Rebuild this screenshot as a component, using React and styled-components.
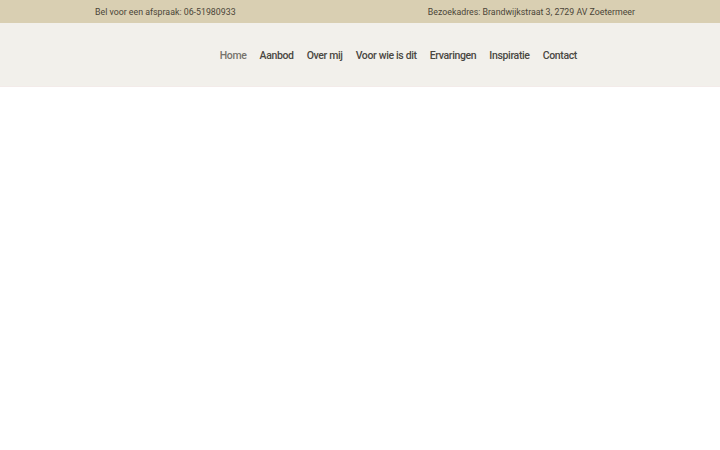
import styled, { createGlobalStyle } from "styled-components";

const GlobalStyle = createGlobalStyle`
    body {
        margin: 0;
        background: #ffffff;
        font-family: "Roboto", "Liberation Sans", sans-serif;
    }
`;

const TopBar = styled.div`
    height: 23px;
    background: #d9cfb2;
    padding: 0 85px 0 95px;
    display: flex;
    align-items: center;
    justify-content: space-between;
    font-size: 8.8px;
    color: #4b4538;
`;

const Header = styled.header`
    height: 63px;
    background: #f2f0eb;
    border-bottom: 1px solid #f3ebe9;
    display: flex;
    align-items: center;
    justify-content: flex-end;
    padding-right: 143px;
`;

const Nav = styled.nav`
    display: flex;
    gap: 13px;
    padding-top: 1px;
`;

const NavLink = styled.a`
    font-size: 10.5px;
    font-weight: 500;
    letter-spacing: -0.35px;
    color: ${(props) => (props.$active ? "#77736c" : "#4a4742")};
    text-decoration: none;
`;

const Main = styled.main`
    height: 364px;
`;

const links = ["Home", "Aanbod", "Over mij", "Voor wie is dit", "Ervaringen", "Inspiratie", "Contact"];

const App = () => {
    return (
        <>
            <GlobalStyle />
            <TopBar>
                <span>Bel voor een afspraak: 06-51980933</span>
                <span>Bezoekadres: Brandwijkstraat 3, 2729 AV Zoetermeer</span>
            </TopBar>
            <Header>
                <Nav>
                    {links.map((l, i) => (
                        <NavLink key={l} href="#" $active={i === 0}>{l}</NavLink>
                    ))}
                </Nav>
            </Header>
            <Main />
        </>
    );
};

export default App;
